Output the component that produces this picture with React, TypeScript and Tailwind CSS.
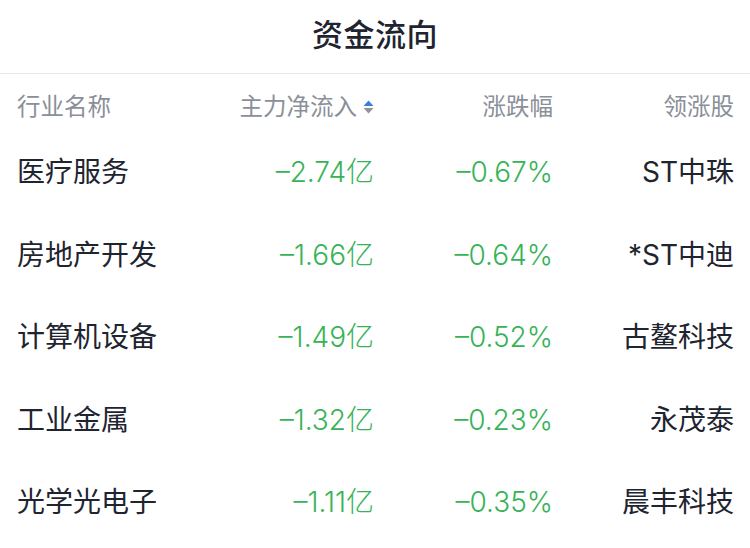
import React from "react";

const rows = [
  { name: "医疗服务", flow: "–2.74亿", pct: "–0.67%", lead: "ST中珠" },
  { name: "房地产开发", flow: "–1.66亿", pct: "–0.64%", lead: "*ST中迪" },
  { name: "计算机设备", flow: "–1.49亿", pct: "–0.52%", lead: "古鳌科技" },
  { name: "工业金属", flow: "–1.32亿", pct: "–0.23%", lead: "永茂泰" },
  { name: "光学光电子", flow: "–1.11亿", pct: "–0.35%", lead: "晨丰科技" },
];

const SortIcon = () => (
  <svg width="11" height="14" viewBox="0 0 11 14" className="ml-[6px]">
    <path d="M5.5 0.5 L10.5 6 L0.5 6 Z" fill="#3b7de0" />
    <path d="M0.5 8 L10.5 8 L5.5 13.5 Z" fill="#8f949c" />
  </svg>
);

export default function App() {
  return (
    <div
      className="w-[750px] h-[548px] bg-white overflow-hidden"
      style={{ fontFamily: 'Inter, "Noto Sans CJK SC", sans-serif' }}
    >
      <div className="h-[74px] border-b border-[#e6e7ea] flex items-center justify-center pb-[2px]">
        <span className="text-[31px] font-medium text-[#1e2430] tracking-[0.5px]">资金流向</span>
      </div>

      <div className="h-[57px] pt-[9px] pl-[17px] pr-[16px] flex items-center text-[23.5px] text-[#8a8f99]">
        <div className="w-[200px]">行业名称</div>
        <div className="w-[157px] flex items-center justify-end">
          主力净流入
          <SortIcon />
        </div>
        <div className="w-[179px] text-right">涨跌幅</div>
        <div className="w-[181px] text-right">领涨股</div>
      </div>

      {rows.map((r) => (
        <div key={r.name} className="h-[82.5px] pl-[17px] pr-[16px] flex items-center text-[28px]">
          <div className="w-[200px] text-[#1e2430]">{r.name}</div>
          <div className="w-[157px] text-right text-[#37b357] font-light">{r.flow}</div>
          <div className="w-[179px] text-right text-[#37b357] font-light">{r.pct}</div>
          <div className="w-[181px] text-right text-[#1e2430]">{r.lead}</div>
        </div>
      ))}
    </div>
  );
}
